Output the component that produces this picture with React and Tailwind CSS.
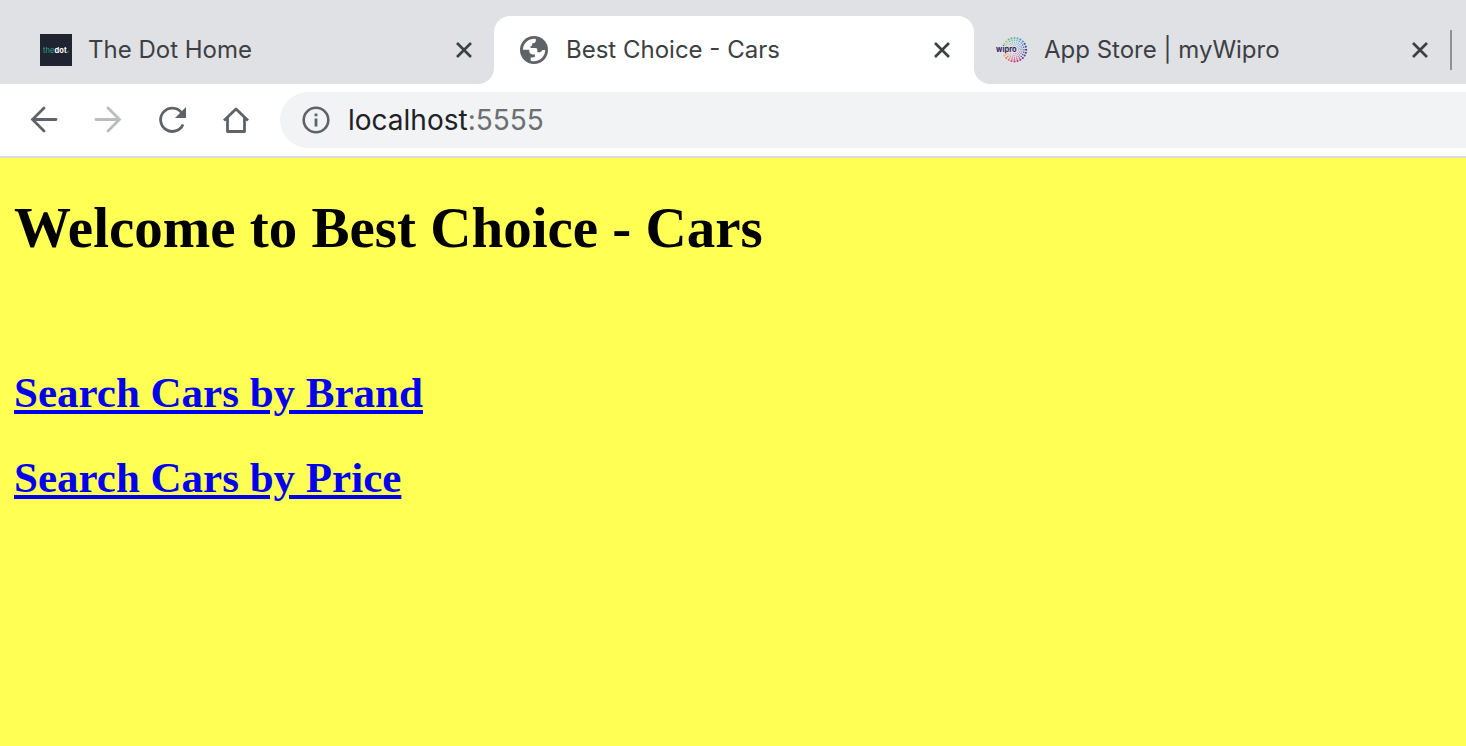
function CloseButton({ label }) {
  return (
    <button type="button" aria-label={label} className="flex size-8 shrink-0 items-center justify-center">
      <svg viewBox="0 0 16 16" className="size-4" fill="none" stroke="#3c4043" strokeWidth="2.7">
        <path d="M1 1L15 15M15 1L1 15" />
      </svg>
    </button>
  );
}

function DotLogo() {
  return (
    <svg viewBox="0 0 32 32" className="size-8 shrink-0" aria-hidden="true">
      <rect width="32" height="32" fill="#202330" />
      <text x="3" y="18.5" fontSize="7.5" fontFamily="Inter, sans-serif" fill="#35a68f">the</text>
      <text x="14.6" y="18.5" fontSize="7.500" fontWeight="700" fontFamily="Inter, sans-serif" fill="#fff">dot</text>
      <rect x="27.2" y="17.2" width="1.4" height="1.4" fill="#2f9c86" />
    </svg>
  );
}

function GlobeIcon() {
  return (
    <svg viewBox="0 0 28 28" className="mx-0.5 size-7 shrink-0" aria-hidden="true">
      <circle cx="14" cy="14" r="14" fill="#5f6368" />
      <path
        fill="#fff"
        d="M2.800 13.800A11.200 11.200 0 0 1 15.800 3V4.800C15.800 6.400 14.600 7.200 13 7.200H12.200V8.600C12.200 9.600 11.500 10.200 10.500 10.200V12H15.300C16.600 12 17.300 12.800 17.300 14V16.200H19.500C21 16.200 22 15.200 22.200 14H25.200A11.200 11.200 0 0 1 10.700 24.700V21.400H13C14.400 21.400 15 20.600 15 19.400V18.400H12.800C10.500 18.400 9.300 17 9.300 15.300V13.800Z"
      />
    </svg>
  );
}

const RING_COLORS = ["#3d3a85", "#5b3a8a", "#b02f78", "#d8336f", "#e8734e", "#f0b452", "#e6d36a", "#9ccf86", "#63b98a", "#54b5c4", "#4b8fc9", "#3c5ca6"];

function WiproLogo() {
  const dots = [];
  [11.7, 9.5, 7.5, 5.7, 4.1].forEach((r, ring) => {
    const count = 24;
    for (let i = 0; i < count; i += 1) {
      const angle = (i / count) * Math.PI * 2;
      const x = 18.5 + r * Math.cos(angle);
      const y = 15.7 + r * Math.sin(angle);
      if (x < 20 && Math.abs(y - 16) < 3.4) continue;
      dots.push(
        <circle key={`${ring}-${i}`} cx={x} cy={y} r={[1.05, 0.7, 0.5, 0.4, 0.3][ring]} fill={RING_COLORS[Math.floor(i / 2)]} />
      );
    }
  });
  return (
    <svg viewBox="0 0 32 32" className="size-8 shrink-0" aria-hidden="true">
      {dots}
      <text x="0" y="18.3" fontSize="7.5" fontWeight="700" fontFamily="Inter, sans-serif" fill="#34235c">wipro</text>
    </svg>
  );
}

function Tab({ icon, title }) {
  return (
    <>
      {icon}
      <span className="min-w-0 flex-1 truncate text-left text-2xl leading-8">{title}</span>
      <CloseButton label={`Close ${title}`} />
    </>
  );
}

function NavButton({ label, children }) {
  return (
    <button type="button" aria-label={label} className="flex size-8 shrink-0 items-center justify-center">
      <svg viewBox="0 0 32 32" className="size-8" fill="none" strokeWidth="2.8">{children}</svg>
    </button>
  );
}

export default function App() {
  return (
    <div className="flex min-h-screen flex-col bg-[#ffff54]">
      <header className="font-[Inter,sans-serif] text-[#3c4043]">
        <div className="h-4 bg-[#dfe1e5]" />
        <nav aria-label="Tabs" className="flex h-[68px] bg-linear-to-b from-[#dfe1e5] from-50% to-white to-50%">
          <div className="flex w-[494px] items-center gap-4 rounded-br-2xl bg-[#dfe1e5] pr-3.5 pl-10">
            <Tab icon={<DotLogo />} title="The Dot Home" />
          </div>
          <div className="flex w-[480px] items-center gap-4 rounded-t-2xl bg-white pr-4 pl-6">
            <Tab icon={<GlobeIcon />} title="Best Choice - Cars" />
          </div>
          <div className="flex min-w-0 flex-1 items-center gap-4 rounded-bl-2xl bg-[#dfe1e5] pr-3.5 pl-[22px]">
            <Tab icon={<WiproLogo />} title="App Store | myWipro" />
            <div className="-ml-0.5 h-10 w-0.5 bg-[#909195]" />
          </div>
        </nav>
        <div className="flex h-[74px] items-center border-b-2 border-[#dadce0] bg-white pl-7">
          <div className="flex gap-8">
            <NavButton label="Back">
              <path stroke="#5f6368" strokeLinecap="round" d="M28 15.500H4.500M16 4L4.500 15.500L16 27" />
            </NavButton>
            <NavButton label="Forward">
              <path stroke="#babcbe" strokeLinecap="round" d="M4 15.500H27.500M16 4L27.500 15.500L16 27" />
            </NavButton>
            <NavButton label="Reload">
              <path stroke="#5f6368" d="M25.500 8.500A11.700 11.700 0 1 0 27 20.500" />
              <path fill="#5f6368" d="M30 3V14H19Z" />
            </NavButton>
            <NavButton label="Home">
              <path stroke="#5f6368" strokeLinejoin="round" d="M4 16.500L16 5L28 16.500M7.500 14V27.500H24.500V14" />
            </NavButton>
          </div>
          <div className="ml-7 flex h-14 min-w-0 flex-1 items-center gap-4 rounded-l-full bg-[#f1f3f4] pl-5">
            <button type="button" aria-label="Site information" className="flex size-8 shrink-0 items-center justify-center">
              <svg viewBox="0 0 28 28" className="size-7">
                <circle cx="14" cy="14" r="12.300" fill="none" stroke="#5f6368" strokeWidth="2.600" />
                <path fill="#5f6368" d="M12.600 7.500H15.400V10.300H12.600ZM12.600 12.400H15.400V20.500H12.600Z" />
              </svg>
            </button>
            <span className="text-[28px] leading-8 text-[#202124]">localhost<span className="text-[#6b6e72]">:5555</span></span>
          </div>
        </div>
      </header>
      <main className="px-3.5 pt-9 font-['Liberation_Serif',serif] font-bold">
        <h1 className="text-[57px] leading-[68px] text-black">Welcome to Best Choice - Cars</h1>
        <div className="mt-[106px] flex flex-col items-start gap-9 text-[43px] leading-[49px] text-[#0000ee]">
          <a href="#brand" className="underline">Search Cars by Brand</a>
          <a href="#price" className="underline">Search Cars by Price</a>
        </div>
      </main>
    </div>
  );
}
